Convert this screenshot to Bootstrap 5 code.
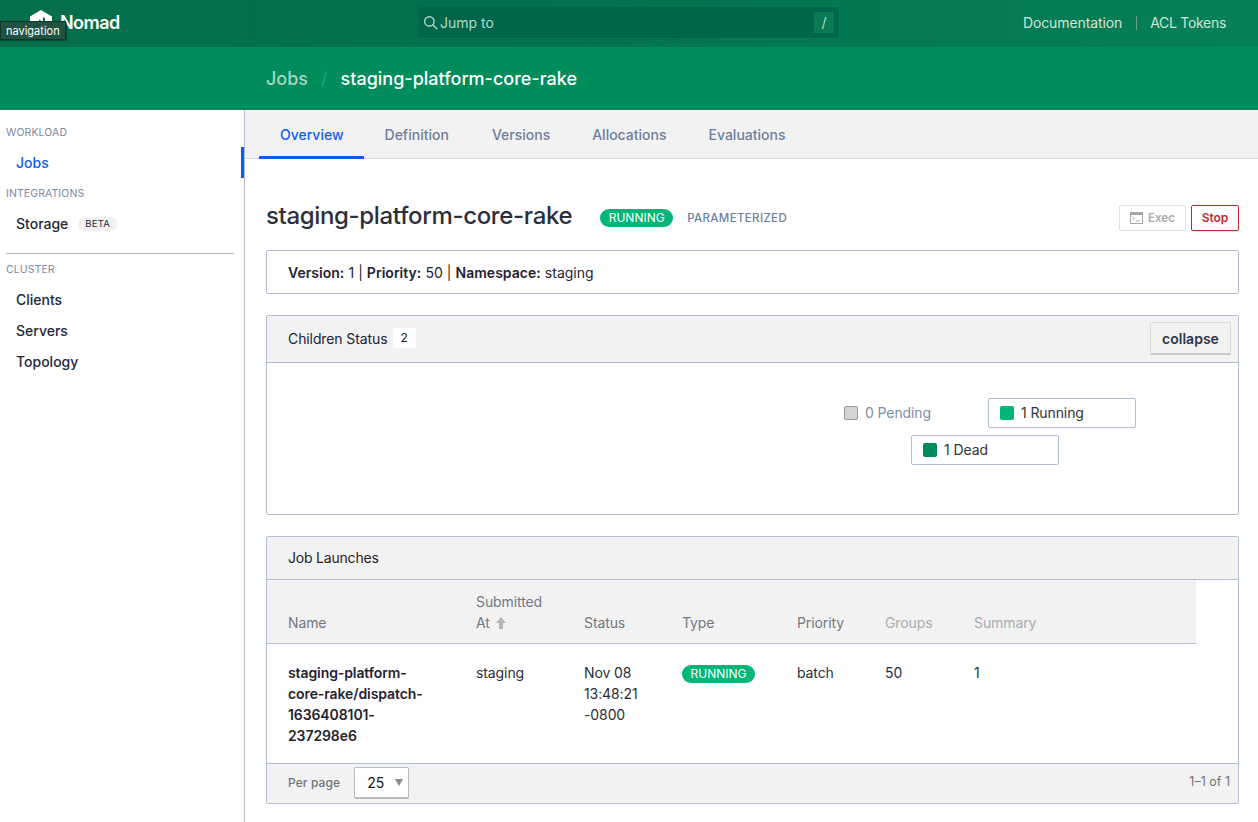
<!DOCTYPE html>
<html lang="en"><head><meta charset="utf-8"><title>Nomad</title>
<link href="https://cdn.jsdelivr.net/npm/bootstrap@5.3.0/dist/css/bootstrap.min.css" rel="stylesheet">
<style>
html,body{height:822px;overflow:hidden}
body{font-family:Inter,"Liberation Sans",sans-serif;font-size:14px;color:#2e3440;background:#fff;letter-spacing:-.1px}
a{text-decoration:none}
.top-bar{height:47px;background:linear-gradient(90deg,#066f4b,#00714d 40%,#068056);position:relative}
.brand{width:418px;height:47px;padding-left:29px;padding-bottom:3px;gap:7px;color:#fff;font-size:18px;font-weight:600;letter-spacing:-.55px}
.tip{position:absolute;left:0;top:21px;height:19px;padding:0 5px;line-height:18px;background:#21523f;border:1px solid #0e3528;color:#fff;font-size:11px;font-weight:400;box-shadow:1px 1px 1px rgba(0,0,0,.3);letter-spacing:0}
.jump{width:421px;height:32px;margin-top:7px;background:#00664a;border-bottom:1px solid #0f7354;border-radius:2px;color:#b5d8c9;padding:0 5px;gap:2px;letter-spacing:0}
.slash{width:20px;height:21px;background:#0a7a55;text-align:center;line-height:21px;margin-left:auto;font-size:14px}
.top-links{gap:14px;padding-right:32px;color:#cfe5da;font-size:14px;margin-left:auto;padding-bottom:2px}
.top-links i{display:block;width:1px;height:14px;background:#5fa88e}
.acl{letter-spacing:-.3px;margin-left:-1px}
.sub-bar{height:63px;background:#008c5b;padding-left:266px;font-size:18px;font-weight:500;color:#fff;letter-spacing:0}
.sub-bar a{color:#a5d6c1}
.sub-bar em{font-style:normal;color:#1fa877;margin:0 13px;font-weight:400}
.shell{height:712px}
.side{width:245px;flex:none;border-right:1px solid #b2bfd2;position:relative;font-weight:500;padding-top:16px}
.sec{font-size:10.5px;color:#7d8aa3;font-weight:400;padding-left:6px;line-height:13px;letter-spacing:.1px}
.sec-int{margin-top:9px}
.slink{display:flex;align-items:center;height:31px;padding-left:16px;color:#23283a;font-size:14px;font-weight:500;line-height:31px;letter-spacing:0}
.slink.on{color:#0a60f2;position:relative}
.slink.on::after{content:"";position:absolute;right:0;top:0;width:3px;height:31px;background:#0a5cf5}
.beta{background:#f0f0f1;border-radius:9px;font-size:9.5px;font-weight:400;line-height:14px;padding:0 7px;margin-left:10px;letter-spacing:.2px;color:#23283a}
.rule{height:1px;background:#b8b8b8;margin:14px 10px 9px 6px}
.main{flex:1;min-width:0}
.tabbar{height:49px;background:#f2f2f3;border-bottom:1px solid #d8d8d8;padding-left:14px}
.tabbar a{display:block;height:49px;line-height:50px;padding:0 21px;color:#6d7f9e;font-weight:500;font-size:14px;letter-spacing:0}
.tabbar a.on{color:#0a60f2;border-bottom:3px solid #0a5cf5;padding-right:20px}
.tabbar a:nth-child(2){padding-right:22px}
.body-pad{padding:0 19px 0 21px}
.title-row{height:91px;align-items:center;padding-top:27px}
.title-row h1{font-size:24px;line-height:30px;font-weight:500;margin:-4px 0 0;color:#2b2f3c;letter-spacing:-.35px}
.pill{background:#00b679;color:#fff;border-radius:10px;font-size:12px;line-height:18px;padding:0 8.5px;font-weight:400;letter-spacing:0}
.pill-top{margin-left:28px}
.para{font-size:11.5px;color:#6d7f9e;font-weight:500;margin:2px 0 0 14px;letter-spacing:.35px}
.act{height:26px;border-radius:2px;font-size:11.5px;font-weight:600;padding:0;line-height:24px;background:#fff;text-align:center;letter-spacing:0}
.act-exec{width:67px;border:1px solid #e2e2e3;color:#a9a9ac;gap:5px}
.act-stop{width:48px;border:1px solid #c6282b;color:#c6282b;margin-left:5px;font-size:12px;box-shadow:0 1px 1px rgba(0,0,0,.12)}
.box{border:1px solid #b2bfd2;border-radius:2px;background:#fff}
.meta{height:44px;line-height:44px;padding-left:21px;font-size:14px;margin-bottom:21px;color:#1f2330;letter-spacing:0;word-spacing:.1px}
.meta b{font-weight:600;letter-spacing:.03px}
.launches{margin-top:21px}
.head{background:#f2f2f3;border-bottom:1px solid #b2bfd2;color:#202431;padding-left:21px;font-size:14px}
.head1{height:47px}
.head1 .ttl{margin-bottom:2px}
.cnt{background:#fff;font-size:12px;line-height:20px;padding:0 8px;margin-left:5px;margin-bottom:2px;border-radius:2px}
.coll{margin-left:auto;margin-right:7px;height:33px;width:81px;padding:0;border:1px solid #d9d9da;border-bottom:2px solid #c8c8c9;border-radius:2px;background:#f2f2f3;font-size:14px;font-weight:600;color:#2d3648;margin-top:-1px;letter-spacing:0}
.chart{height:151px;position:relative}
.leg{position:absolute;width:148px;height:30px;display:flex;align-items:center;padding:0 0 1px 11px;gap:7px;font-size:14px;color:#2e3440;border:1px solid #b2bfd2;border-radius:2px}
.leg.off{border-color:transparent;color:#7d8ca8}
.sw{width:14px;height:14px;border-radius:2px;flex:none}
.head2{height:43px;padding-bottom:1px;letter-spacing:-.2px}
.tbl-wrap{height:183px;overflow:hidden}
.jobtbl{width:929px;table-layout:fixed;border-collapse:collapse;font-size:14px;color:#2a2e3a}
.jobtbl th{background:#f2f2f3;border-bottom:1px solid #b2bfd2;font-weight:400;color:#747881;vertical-align:bottom;padding:0 21px 10px;height:63px;line-height:21px;text-align:left}
.jobtbl th.dim{color:#a9acb2}
.jobtbl td{vertical-align:top;padding:18px 21px 0;line-height:21px;border:0}
.jobtbl td b{font-weight:600;color:#1f2330}
.sort-up{margin-left:6px;vertical-align:-1px}
.foot{height:40px;background:#f2f2f3;border-top:1px solid #b2bfd2;padding:0 8px 2px 21px;font-size:12px;color:#6f737c;letter-spacing:0}
.perlbl{font-weight:500;letter-spacing:.1px}
.psel{width:55px;height:32px;margin-left:14px;background:#fff;border:1px solid #b8bbc0;border-bottom:2px solid #b8bbc0;border-radius:2px;padding-left:12px;font-size:14px;color:#15181f;gap:11px}
.tri{width:0;height:0;border-left:4.5px solid transparent;border-right:4.5px solid transparent;border-top:7px solid #8a8a8a}
.count-r{font-size:12.5px}
</style></head><body>
<header class="top-bar d-flex">
  <div class="brand d-flex align-items-center">
    <svg width="24" height="24" viewBox="0 0 24 24" aria-hidden="true"><path fill="#fff" fill-rule="evenodd" d="M12 0 23 6.500v11L12 24 1 17.500v-11zM14 7v5l-4-2.500V17l2 1.200v-5l4 2.500V8.200z"/></svg>
    <span>Nomad</span>
    <span class="tip">navigation</span>
  </div>
  <div class="jump d-flex align-items-center">
    <svg width="15" height="15" viewBox="0 0 16 16" fill="none" stroke="#b5d8c9" stroke-width="1.5" aria-hidden="true"><circle cx="6.8" cy="6.8" r="5"/><path d="m10.500 10.500 4.500 4.500"/></svg>
    <span>Jump to</span><span class="slash">/</span>
  </div>
  <nav class="top-links d-flex align-items-center"><span>Documentation</span><i></i><span class="acl">ACL Tokens</span></nav>
</header>
<div class="sub-bar d-flex align-items-center"><a href="#">Jobs</a><em>/</em><span>staging-platform-core-rake</span></div>
<div class="shell d-flex">
  <aside class="side">
    <div class="sec">WORKLOAD</div>
    <a class="slink on mt-2" href="#">Jobs</a>
    <div class="sec sec-int">INTEGRATIONS</div>
    <a class="slink mt-2" href="#">Storage<span class="beta">BETA</span></a>
    <div class="rule"></div>
    <div class="sec">CLUSTER</div>
    <a class="slink mt-2" href="#">Clients</a>
    <a class="slink" href="#">Servers</a>
    <a class="slink" href="#">Topology</a>
  </aside>
  <main class="main">
    <nav class="tabbar d-flex"><a class="on" href="#">Overview</a><a href="#">Definition</a><a href="#">Versions</a><a href="#">Allocations</a><a href="#">Evaluations</a></nav>
    <div class="body-pad">
      <div class="title-row d-flex">
        <h1>staging-platform-core-rake</h1>
        <span class="pill pill-top">RUNNING</span><span class="para">PARAMETERIZED</span>
        <button class="act act-exec ms-auto d-flex align-items-center justify-content-center"><svg width="13" height="12" viewBox="0 0 13 12" aria-hidden="true"><path fill="#a5a5a8" d="M1 0h11a1 1 0 0 1 1 1v10a1 1 0 0 1-1 1H1a1 1 0 0 1-1-1V1a1 1 0 0 1 1-1z"/><path fill="#fff" d="M1 3h11v8H1z"/><path d="m2.500 5 2 1.500-2 1.500M6 9h3.500" fill="none" stroke="#a5a5a8"/></svg>Exec</button>
        <button class="act act-stop">Stop</button>
      </div>
      <div class="box meta"><b>Version:</b> 1 | <b>Priority:</b> 50 | <b>Namespace:</b> staging</div>
      <section class="box">
        <div class="head head1 d-flex align-items-center"><span class="ttl">Children Status</span><span class="cnt">2</span><button class="coll">collapse</button></div>
        <div class="chart">
          <div class="leg off" style="left:565px;top:35px"><span class="sw" style="background:#d4d4d4;border:1px solid #9a9a9a"></span>0 Pending</div>
          <div class="leg" style="left:721px;top:35px"><span class="sw" style="background:#00b679"></span>1 Running</div>
          <div class="leg" style="left:644px;top:72px"><span class="sw" style="background:#008c5b"></span>1 Dead</div>
        </div>
      </section>
      <section class="box launches">
        <div class="head head2 d-flex align-items-center">Job Launches</div>
        <div class="tbl-wrap">
          <table class="jobtbl">
            <colgroup><col style="width:188px"><col style="width:108px"><col style="width:98px"><col style="width:115px"><col style="width:88px"><col style="width:89px"><col></colgroup>
            <thead><tr><th>Name</th><th>Submitted <span class="text-nowrap">At<svg class="sort-up" width="10" height="12" viewBox="0 0 10 12" aria-hidden="true"><path fill="#b4b6bb" d="M5 0 10 6H7v6H3V6H0z"/></svg></span></th><th>Status</th><th>Type</th><th>Priority</th><th class="dim">Groups</th><th class="dim">Summary</th></tr></thead>
            <tbody><tr><td><b>staging-platform-core-rake/dispatch-1636408101-237298e6</b></td><td>staging</td><td>Nov 08 13:48:21 -0800</td><td><span class="pill d-inline-block">RUNNING</span></td><td>batch</td><td>50</td><td>1</td></tr></tbody>
          </table>
        </div>
        <div class="foot d-flex align-items-center"><span class="perlbl">Per page</span><div class="psel d-flex align-items-center">25<span class="tri"></span></div><span class="ms-auto count-r">1–1 of 1</span></div>
      </section>
    </div>
  </main>
</div>
<script src="https://cdn.jsdelivr.net/npm/bootstrap@5.3.0/dist/js/bootstrap.bundle.min.js"></script>
</body></html>
